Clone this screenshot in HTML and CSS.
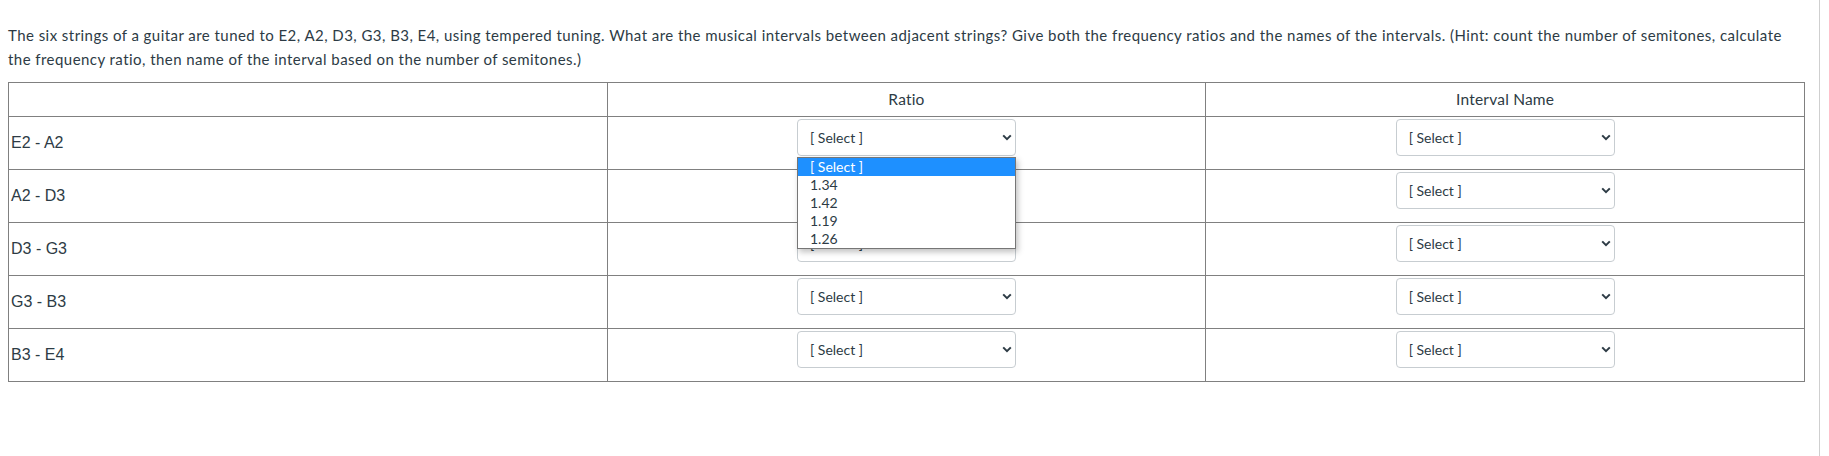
FILE: index.html
```html
<!DOCTYPE html>
<html lang="en">
<head>
<meta charset="utf-8">
<title>Guitar intervals</title>
<link rel="stylesheet" href="styles.css">
</head>
<body>
<div class="page">
  <div class="question">
    <p class="question-text">The six strings of a guitar are tuned to E2, A2, D3, G3, B3, E4, using tempered tuning. What are the musical intervals between adjacent strings? Give both the frequency ratios and the names of the intervals. (Hint: count the number of semitones, calculate the frequency ratio, then name of the interval based on the number of semitones.)</p>
    <table class="grid">
      <thead>
        <tr><th></th><th>Ratio</th><th>Interval Name</th></tr>
      </thead>
      <tbody>
        <tr>
          <td class="label">E2 - A2</td>
          <td class="pick">
            <div class="select-wrap">
              <div class="select">[ Select ]</div>
              <svg class="chev" width="10" height="7" viewBox="0 0 10 7"><path d="M1.2 1.4 L5 5.2 L8.8 1.4" fill="none" stroke="#2d3b45" stroke-width="2"/></svg>
              <ul class="menu">
                <li class="on">[ Select ]</li>
                <li>1.34</li>
                <li>1.42</li>
                <li>1.19</li>
                <li>1.26</li>
              </ul>
            </div>
          </td>
          <td class="pick">
            <div class="select-wrap">
              <div class="select">[ Select ]</div>
              <svg class="chev" width="10" height="7" viewBox="0 0 10 7"><path d="M1.2 1.4 L5 5.2 L8.8 1.4" fill="none" stroke="#2d3b45" stroke-width="2"/></svg>
            </div>
          </td>
        </tr>
        <tr>
          <td class="label">A2 - D3</td>
          <td class="pick">
            <div class="select-wrap">
              <div class="select">[ Select ]</div>
              <svg class="chev" width="10" height="7" viewBox="0 0 10 7"><path d="M1.2 1.4 L5 5.2 L8.8 1.4" fill="none" stroke="#2d3b45" stroke-width="2"/></svg>
            </div>
          </td>
          <td class="pick">
            <div class="select-wrap">
              <div class="select">[ Select ]</div>
              <svg class="chev" width="10" height="7" viewBox="0 0 10 7"><path d="M1.2 1.4 L5 5.2 L8.8 1.4" fill="none" stroke="#2d3b45" stroke-width="2"/></svg>
            </div>
          </td>
        </tr>
        <tr>
          <td class="label">D3 - G3</td>
          <td class="pick">
            <div class="select-wrap">
              <div class="select">[ Select ]</div>
              <svg class="chev" width="10" height="7" viewBox="0 0 10 7"><path d="M1.2 1.4 L5 5.2 L8.8 1.4" fill="none" stroke="#2d3b45" stroke-width="2"/></svg>
            </div>
          </td>
          <td class="pick">
            <div class="select-wrap">
              <div class="select">[ Select ]</div>
              <svg class="chev" width="10" height="7" viewBox="0 0 10 7"><path d="M1.2 1.4 L5 5.2 L8.8 1.4" fill="none" stroke="#2d3b45" stroke-width="2"/></svg>
            </div>
          </td>
        </tr>
        <tr>
          <td class="label">G3 - B3</td>
          <td class="pick">
            <div class="select-wrap">
              <div class="select">[ Select ]</div>
              <svg class="chev" width="10" height="7" viewBox="0 0 10 7"><path d="M1.2 1.4 L5 5.2 L8.8 1.4" fill="none" stroke="#2d3b45" stroke-width="2"/></svg>
            </div>
          </td>
          <td class="pick">
            <div class="select-wrap">
              <div class="select">[ Select ]</div>
              <svg class="chev" width="10" height="7" viewBox="0 0 10 7"><path d="M1.2 1.4 L5 5.2 L8.8 1.4" fill="none" stroke="#2d3b45" stroke-width="2"/></svg>
            </div>
          </td>
        </tr>
        <tr>
          <td class="label">B3 - E4</td>
          <td class="pick">
            <div class="select-wrap">
              <div class="select">[ Select ]</div>
              <svg class="chev" width="10" height="7" viewBox="0 0 10 7"><path d="M1.2 1.4 L5 5.2 L8.8 1.4" fill="none" stroke="#2d3b45" stroke-width="2"/></svg>
            </div>
          </td>
          <td class="pick">
            <div class="select-wrap">
              <div class="select">[ Select ]</div>
              <svg class="chev" width="10" height="7" viewBox="0 0 10 7"><path d="M1.2 1.4 L5 5.2 L8.8 1.4" fill="none" stroke="#2d3b45" stroke-width="2"/></svg>
            </div>
          </td>
        </tr>
      </tbody>
    </table>
  </div>
</div>
</body>
</html>
```

FILE: styles.css
```css
html, body {
  margin: 0;
  padding: 0;
  background: #ffffff;
}

.page {
  width: 1820px;
  height: 456px;
  border-right: 1px solid #cfcfcf;
  box-sizing: border-box;
  font-family: Lato, "Open Sans", sans-serif;
  color: #2d3b45;
}

.question {
  padding: 23px 0 0 8px;
  width: 1797px;
}

.question-text {
  margin: 0 0 11px 0;
  font-size: 15px;
  letter-spacing: 0.45px;
  line-height: 24px;
}

.grid {
  width: 1797px;
  border-collapse: collapse;
  table-layout: fixed;
  border: 1px solid #808080;
}

.grid th,
.grid td {
  border: 1px solid #808080;
}

.grid th {
  font-weight: normal;
  font-size: 15.5px;
  letter-spacing: 0.2px;
  line-height: 25px;
  padding: 4px 2px;
  text-align: center;
}

.grid td.label {
  font-family: "Liberation Sans", Arial, sans-serif;
  font-size: 16px;
  color: #2d3b45;
  padding: 0 2px;
  vertical-align: middle;
}

.grid td.pick {
  padding: 2px;
  vertical-align: top;
}

.select-wrap {
  position: relative;
  width: 219px;
  height: 37px;
  margin: 0 auto 11px;
}

.select {
  box-sizing: border-box;
  width: 219px;
  height: 37px;
  border: 1px solid #c7cdd1;
  border-radius: 4px;
  background: #ffffff;
  padding: 0 12px;
  font-size: 14px;
  line-height: 35px;
  color: #2d3b45;
}

.chev {
  position: absolute;
  right: 4px;
  top: 15px;
}

.menu {
  position: absolute;
  left: 0;
  top: 38px;
  z-index: 5;
  box-sizing: border-box;
  width: 219px;
  margin: 0;
  padding: 0;
  list-style: none;
  background: #ffffff;
  border: 1px solid #767676;
  box-shadow: 2px 3px 6px rgba(0, 0, 0, 0.25);
}

.menu li {
  height: 18px;
  line-height: 18px;
  padding: 0 12px;
  font-size: 14px;
  color: #2d3b45;
}

.menu li.on {
  background: #1e90ff;
  color: #ffffff;
}
```
